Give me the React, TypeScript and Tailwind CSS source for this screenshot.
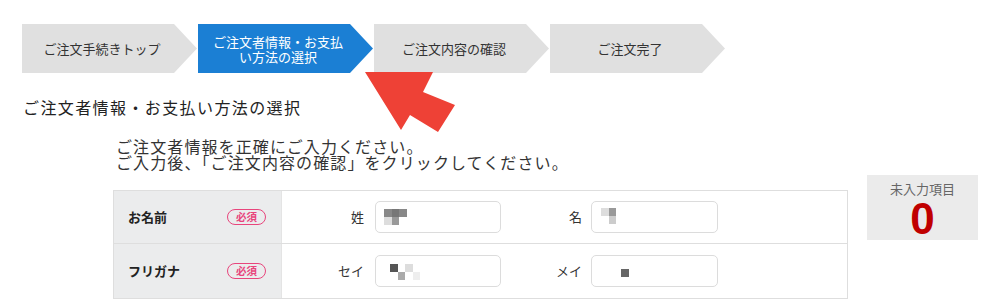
import type { ReactNode } from "react";

const jp = { fontFamily: '"Noto Sans CJK JP", "Noto Sans", sans-serif' };

function Step({ active, first, children }: { active?: boolean; first?: boolean; children: ReactNode }) {
    return (
        <div
            className={`flex h-[49px] w-[175px] items-center justify-center pr-[15px] text-center text-[13px] leading-[15px] [clip-path:polygon(0_0,152px_0,175px_50%,152px_100%,0_100%)] ${
                active ? "bg-[#1b7fd4] text-white" : "bg-[#e0e0e0] text-[#333]"
            } ${first ? "" : "ml-px"}`}
        >
            {children}
        </div>
    );
}

// blurred (mosaic) entries in the inputs
function Mosaic({ cells, className }: { cells: (string | null)[][]; className: string }) {
    return (
        <div className={`flex flex-col ${className}`}>
            {cells.map((row, i) => (
                <div key={i} className="flex">
                    {row.map((c, j) => (
                        <div key={j} className="h-[8px] w-[7.5px]" style={{ background: c ?? "transparent" }} />
                    ))}
                </div>
            ))}
        </div>
    );
}

function Field({ label, labelW, gap, inputW, cells, pad }: {
    label: string; labelW: string; gap: string; inputW: string;
    cells: (string | null)[][]; pad: string;
}) {
    return (
        <div className="flex items-center">
            <div className={`${labelW} text-right text-[13px] text-[#333]`}>{label}</div>
            <div className={`${gap} h-[32px] ${inputW} rounded-[5px] border border-[#dcdcdc] bg-white`}>
                <Mosaic cells={cells} className={pad} />
            </div>
        </div>
    );
}

function Required() {
    return (
        <span className="flex h-[16px] w-[39px] items-center justify-center rounded-full border border-[#e8457c] text-[10.5px] font-bold text-[#e8457c]">
            必須
        </span>
    );
}

function Row({ label, children, last }: { label: string; children: ReactNode; last?: boolean }) {
    return (
        <div className={`flex ${last ? "h-[54px]" : "h-[53px] border-b border-[#dedede]"}`}>
            <div className="flex w-[167px] items-center bg-[#ebeced] pl-[14px]">
                <span className="w-[99px] text-[13px] font-bold text-[#222]">{label}</span>
                <Required />
            </div>
            <div className="flex flex-1 items-center border-l border-[#e4e4e4] pl-[11px]">{children}</div>
        </div>
    );
}

export default function App() {
    return (
        <div className="relative h-[300px] w-[1000px] overflow-hidden bg-white" style={jp}>
            {/* progress steps */}
            <div className="flex pl-[22px] pt-[24px]">
                <Step first>ご注文手続きトップ</Step>
                <Step active>
                    ご注文者情報・お支払
                    <br />
                    い方法の選択
                </Step>
                <Step>ご注文内容の確認</Step>
                <Step>ご注文完了</Step>
            </div>

            <h2 className="mt-[24px] pl-[23px] text-[16px] leading-[20px] tracking-[1.4px] text-[#222]">
                ご注文者情報・お支払い方法の選択
            </h2>

            <div className="mt-[21px] flex items-start pl-[113px]">
                <div>
                    <p className="pl-[3px] text-[16px] leading-[16px] tracking-[1.1px] text-[#333]">
                        ご注文者情報を正確にご入力ください。
                        <br />
                        ご入力後、「ご注文内容の確認」をクリックしてください。
                    </p>
                    <div className="mt-[20px] w-[735px] border border-[#dedede]">
                        <Row label="お名前">
                            <Field label="姓" labelW="w-[71px]" gap="ml-[11px]" inputW="w-[126px]" pad="pl-[8px] pt-[7px]"
                                cells={[["#888", "#777", "#888"], ["#ddd", "#999", null]]} />
                            <Field label="名" labelW="w-[81px]" gap="ml-[9px]" inputW="w-[127px]" pad="pl-[9px] pt-[6px]"
                                cells={[["#ddd", "#999"], [null, "#ccc"]]} />
                        </Row>
                        <Row label="フリガナ" last>
                            <Field label="セイ" labelW="w-[71px]" gap="ml-[11px]" inputW="w-[126px]" pad="pl-[14px] pt-[8px]"
                                cells={[["#555", null, "#ddd", null], [null, "#aaa", null, "#eee"]]} />
                            <Field label="メイ" labelW="w-[81px]" gap="ml-[9px]" inputW="w-[127px]" pad="pl-[29px] pt-[13px]"
                                cells={[["#666"]]} />
                        </Row>
                    </div>
                </div>

                <div className="ml-[19px] mt-[37px] flex h-[65px] w-[111px] flex-col items-center bg-[#ebebeb] pt-[5px]">
                    <span className="text-[13px] leading-[17px] text-[#666]">未入力項目</span>
                    <span className="mt-[2px] text-[44px] font-bold leading-[40px] text-[#c00000]" style={{ fontFamily: '"Liberation Sans", sans-serif' }}>
                        0
                    </span>
                </div>
            </div>

            {/* red pointer arrow */}
            <svg className="pointer-events-none absolute left-0 top-0" width="1000" height="300">
                <polygon points="365,72 433,72 423,92 455,105 438,132 410,115 401,130" fill="#ee4136" />
            </svg>
        </div>
    );
}
